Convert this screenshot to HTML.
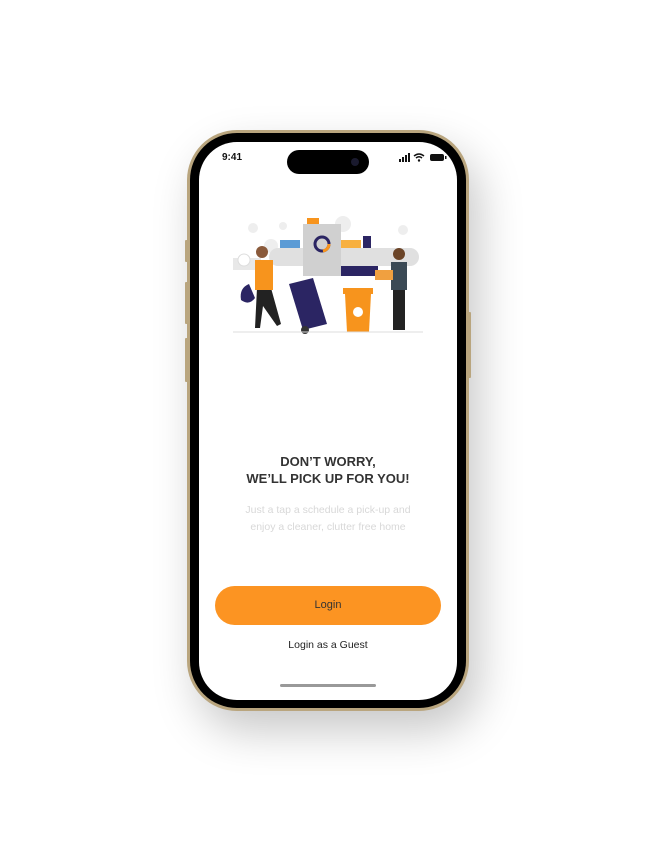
<!DOCTYPE html>
<html><head><meta charset="utf-8"><style>
*{margin:0;padding:0;box-sizing:border-box}
body{width:655px;height:841px;background:#fff;position:relative;overflow:hidden;font-family:"Liberation Sans",sans-serif}
.frame{position:absolute;left:187px;top:130px;width:282px;height:581px;border-radius:50px;background:#b9a57e;box-shadow:10px 20px 44px rgba(0,0,0,.22)}
.bez{position:absolute;left:190px;top:133px;width:276px;height:575px;border-radius:47px;background:#000}
.btn{position:absolute;background:#b9a57e;width:3px;border-radius:1px}
.screen{position:absolute;left:199px;top:142px;width:258px;height:558px;border-radius:38px;background:#fff;overflow:hidden}
.island{position:absolute;left:88px;top:8px;width:82px;height:24px;border-radius:12px;background:#000}
.t{position:absolute;left:0;width:258px;text-align:center}
</style></head><body>
<div class="frame"></div>
<div class="btn" style="left:185px;top:240px;height:22px"></div>
<div class="btn" style="left:185px;top:282px;height:42px"></div>
<div class="btn" style="left:185px;top:338px;height:44px"></div>
<div class="btn" style="left:468px;top:312px;height:66px"></div>
<div class="bez"></div>
<div class="screen">
<div class="island"><div style="position:absolute;right:10px;top:8px;width:8px;height:8px;border-radius:50%;background:#1a1a2e"></div></div>
<div style="position:absolute;left:23px;top:10px;font-size:10px;font-weight:bold;color:#111">9:41</div>
<svg style="position:absolute;left:200px;top:11px" width="50" height="9" viewBox="0 0 50 9">
<rect x="0" y="6" width="2" height="3" fill="#111"/><rect x="3" y="4" width="2" height="5" fill="#111"/><rect x="6" y="2" width="2" height="7" fill="#111"/><rect x="9" y="0" width="2" height="9" fill="#111"/>
<path d="M15 3 Q20 -1 25 3 M17 5 Q20 2.5 23 5" stroke="#111" stroke-width="1.5" fill="none"/><circle cx="20" cy="7.5" r="1.2" fill="#111"/>
<rect x="31" y="1" width="14" height="7" rx="2" fill="#111"/><rect x="46" y="3" width="1.5" height="3" fill="#111"/></svg>
<svg style="position:absolute;left:34px;top:72px" width="190" height="124" viewBox="0 0 190 124">
<g fill="#eee"><circle cx="20" cy="14" r="5"/><circle cx="38" cy="32" r="7"/><circle cx="110" cy="10" r="8"/><circle cx="170" cy="16" r="5"/><circle cx="50" cy="12" r="4"/></g>
<rect x="0" y="44" width="28" height="12" fill="#e8e8e8"/>
<rect x="36" y="34" width="150" height="18" rx="9" fill="#e0e0e0"/>
<rect x="76" y="52" width="26" height="10" fill="#2b2563"/><rect x="105" y="52" width="40" height="10" fill="#2b2563"/>
<rect x="70" y="10" width="38" height="52" fill="#d0d0d0"/><rect x="74" y="4" width="12" height="6" fill="#f7941d"/>
<circle cx="89" cy="30" r="7" fill="none" stroke="#2b2563" stroke-width="3"/><circle cx="89" cy="30" r="7" fill="none" stroke="#f7941d" stroke-width="3" stroke-dasharray="10 34"/>
<rect x="47" y="26" width="20" height="8" fill="#5b9bd5"/><rect x="108" y="26" width="20" height="8" fill="#f7b040"/><rect x="130" y="22" width="8" height="12" fill="#2b2563"/>
<g transform="translate(0,14)">
<circle cx="11" cy="32" r="6" fill="#fff" stroke="#ddd"/>
<path d="M24 60 L22 100 L27 100 L30 78 L44 98 L48 96 L38 60 Z" fill="#222"/>
<rect x="22" y="32" width="18" height="30" fill="#f7941d"/><circle cx="29" cy="24" r="6" fill="#8a5a3b"/>
<path d="M16 56 Q6 60 8 72 Q16 78 22 70 Z" fill="#2b2563"/>
<path d="M56 56 L80 50 L94 96 L70 102 Z" fill="#2b2563"/><circle cx="72" cy="102" r="4" fill="#333"/>
<rect x="110" y="60" width="30" height="6" fill="#f7941d"/><path d="M112 66 L138 66 L136 104 L114 104 Z" fill="#f7941d"/><circle cx="125" cy="84" r="5" fill="#fff"/>
<rect x="158" y="34" width="16" height="28" fill="#3b4a55"/><circle cx="166" cy="26" r="6" fill="#6b4428"/>
<rect x="160" y="62" width="12" height="40" fill="#222"/><rect x="142" y="42" width="18" height="10" fill="#f0a040"/>
<line x1="0" y1="104" x2="190" y2="104" stroke="#ddd"/>
</g>
</svg>
<div class="t" style="top:311px;font-size:13px;font-weight:bold;color:#333;line-height:17px">DON’T WORRY,<br>WE’LL PICK UP FOR YOU!</div>
<div class="t" style="top:360px;font-size:10.5px;color:#d8d8d8;line-height:16.5px">Just a tap a schedule a pick-up and<br>enjoy a cleaner, clutter free home</div>
<div style="position:absolute;left:16px;top:444px;width:226px;height:39px;border-radius:20px;background:#fc9422;text-align:center;line-height:39px;font-size:11px;color:#333">Login</div>
<div class="t" style="top:497px;font-size:10.5px;color:#222">Login as a Guest</div>
<div style="position:absolute;left:81px;top:542px;width:96px;height:3px;border-radius:2px;background:#999"></div>
</div>
</body></html>
